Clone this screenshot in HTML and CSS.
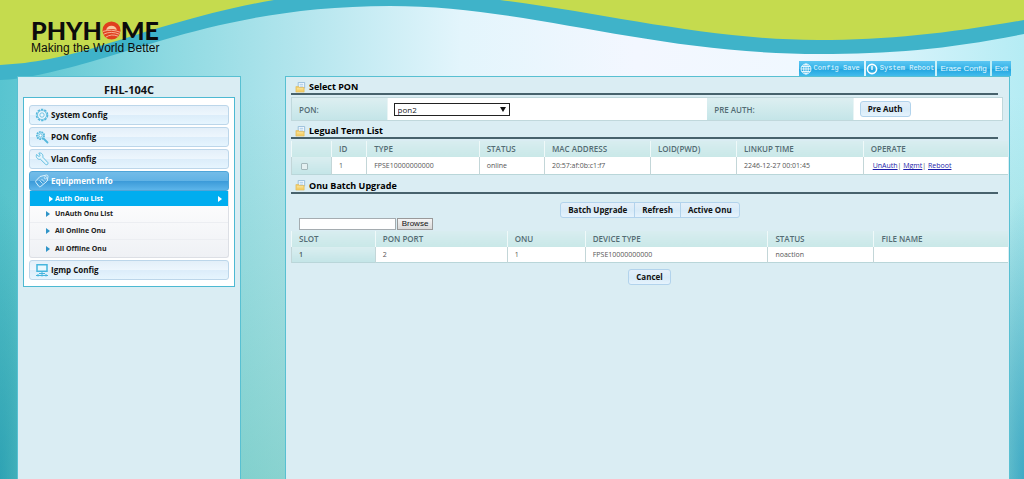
FILE: index.html
```html
<!DOCTYPE html>
<html lang="en">
<head>
<meta charset="utf-8">
<title>FHL-104C</title>
<link rel="stylesheet" href="styles.css">
</head>
<body>
<svg class="waves" viewBox="0 0 1024 90" preserveAspectRatio="none" aria-hidden="true">
  <path fill="#3fb3c9" d="M0 0H1024V34C950 49 890 54 820 54C650 54 530 6 390 6C250 6 160 42 90 62C50 73 25 79 0 80Z"/>
  <path fill="#c5db4e" d="M0 0H274C205 12 150 31 100 46C60 58 35 63 0 65Z"/>
  <path fill="#c5db4e" d="M500 0H1024V20C950 33 890 40 818 40C710 40 610 14 500 0Z"/>
</svg>
<svg class="defs" aria-hidden="true">
  <symbol id="note" viewBox="0 0 12 12"><path fill="#f7fbff" stroke="#94bbd9" d="M3.5.5h7v6h-7z"/><path stroke="#9fc6e4" d="M5 2.500h4M5 4.500h4"/><path fill="#f3cf6b" stroke="#dfb550" stroke-width=".6" d="M1 5h3l1 1h5v5H1z"/><path fill="#fce9a5" d="M2 7h7v1H2z"/></symbol>
</svg>
<header class="header">
  <div class="brand">
    <div class="brand-name"><span>PHYH</span><svg class="sun" viewBox="0 0 20 20" role="img" aria-label="O"><circle cx="10" cy="10" r="9.500" fill="#e0401f"/><path fill="#f9c9a0" d="M4.500 9.500a5.500 4.500 0 0 1 11 0q-5-2-11 0z"/><path fill="none" stroke="#f6b79a" stroke-width="1" d="M1 11q9-3 18.500 1M1.500 14q8-4 17 0M4 17q6-4 13-1"/></svg><span>ME</span></div>
    <div class="tagline">Making the World Better</div>
  </div>
  <nav class="tools">
    <a class="tool mono" href="#"><svg viewBox="0 0 12 12"><g fill="none" stroke="#fff" stroke-width=".8"><circle cx="6" cy="6" r="5"/><ellipse cx="6" cy="6" rx="2.300" ry="5"/><path d="M1 6h10M6 1v10M1.700 3.500h8.600M1.700 8.500h8.600"/></g></svg><span>Config Save</span></a>
    <a class="tool mono" href="#"><svg viewBox="0 0 12 12"><circle cx="6" cy="6" r="4.600" fill="none" stroke="#fff" stroke-width="1.600"/><path stroke="#fff" stroke-width="1.400" d="M6 3v4"/></svg><span>System Reboot</span></a>
    <a class="tool" href="#">Erase Config</a>
    <a class="tool" href="#">Exit</a>
  </nav>
</header>
<div class="page">
  <aside class="sidebar">
    <h1 class="device">FHL-104C</h1>
    <nav class="menu">
      <a class="item" href="#"><svg viewBox="0 0 14 14"><circle cx="7" cy="7" r="5.500" fill="none" stroke="#55b8dc" stroke-width="1.600" stroke-dasharray="2.400 1.050"/><circle cx="7" cy="7" r="4.500" fill="#edf7fd" stroke="#55b8dc" stroke-width=".8"/><circle cx="7" cy="7" r="2.200" fill="none" stroke="#55b8dc" stroke-width=".8"/></svg>System Config</a>
      <a class="item" href="#"><svg viewBox="0 0 14 14"><circle cx="5.500" cy="5.500" r="3.600" fill="#c9e9f7" stroke="#55b8dc" stroke-width="1.800" stroke-dasharray="1.700 .8"/><circle cx="5.500" cy="5.500" r="1.600" fill="#fff" stroke="#55b8dc" stroke-width=".8"/><path stroke="#55b8dc" stroke-width="1.800" stroke-linecap="round" d="m8.500 8.500 4 4"/></svg>PON Config</a>
      <a class="item" href="#"><svg viewBox="0 0 14 14"><path fill="#e3f4fc" stroke="#55b8dc" stroke-width=".9" d="M1.500 2.500 4 4.500 5.200 3.500 3.800 1C6.500.5 8.500 2.500 7.800 5.200l5 5.300c.8 1.500-.8 2.800-2 2L5.500 7.300C3 8 .5 5.500 1.500 2.500z"/></svg>Vlan Config</a>
      <a class="item open" href="#"><svg viewBox="0 0 14 14"><path fill="none" stroke="#d9f1fc" d="M5 2.500 11.500 1q1.500 0 1.500 1.500l-.8 4.500-6.500 5.500q-1 .8-2-.3L1 8.500q-.8-1 .2-2z"/><circle cx="10.500" cy="3.700" r="1.200" fill="none" stroke="#d9f1fc" stroke-width=".8"/><path stroke="#d9f1fc" stroke-width=".8" d="m4.500 6.500 3 3M6.500 5l3 3"/></svg>Equipment Info</a>
      <div class="submenu">
        <a class="sub current" href="#"><i class="arrow"></i>Auth Onu List<i class="arrow end"></i></a>
        <a class="sub" href="#"><i class="arrow"></i>UnAuth Onu List</a>
        <a class="sub" href="#"><i class="arrow"></i>All Online Onu</a>
        <a class="sub" href="#"><i class="arrow"></i>All Offline Onu</a>
      </div>
      <a class="item" href="#"><svg viewBox="0 0 14 14"><path fill="#e9f8fe" stroke="#46b5dd" stroke-width="1.500" d="M2 1.700h10v6.600H2z"/><path fill="none" stroke="#46b5dd" d="M7 8.500v2M4 10.500h6M1 12.500h12M3 11v2.500M7 11v2.500M11 11v2.500"/></svg>Igmp Config</a>
    </nav>
  </aside>
  <main class="main">
    <h2 class="heading"><svg><use href="#note"/></svg>Select PON</h2>
    <div class="form">
      <label class="form-label" for="pon">PON:</label>
      <div class="form-field"><select id="pon" class="select"><option>pon2</option></select></div>
      <div class="form-label">PRE AUTH:</div>
      <div class="form-field"><button class="btn" type="button">Pre Auth</button></div>
    </div>
    <h2 class="heading"><svg><use href="#note"/></svg>Legual Term List</h2>
    <table class="grid terms">
      <colgroup><col class="w-pick"><col class="w-id"><col class="w-type"><col class="w-status"><col class="w-mac"><col class="w-loid"><col class="w-time"><col></colgroup>
      <thead><tr><th></th><th>ID</th><th>TYPE</th><th>STATUS</th><th>MAC ADDRESS</th><th>LOID(PWD)</th><th>LINKUP TIME</th><th>OPERATE</th></tr></thead>
      <tbody><tr><td class="lead"><input class="check" type="checkbox" aria-label="Select ONU 1"></td><td>1</td><td>FPSE10000000000</td><td>online</td><td>20:57:af:0b:c1:f7</td><td></td><td>2246-12-27 00:01:45</td><td class="ops"><a href="#">UnAuth</a>| <a href="#">Mgmt</a>| <a href="#">Reboot</a></td></tr></tbody>
    </table>
    <h2 class="heading"><svg><use href="#note"/></svg>Onu Batch Upgrade</h2>
    <div class="actions group">
      <button class="btn" type="button">Batch Upgrade</button><button class="btn" type="button">Refresh</button><button class="btn" type="button">Active Onu</button>
    </div>
    <div class="upload"><input class="file" type="text" aria-label="Upgrade file"><button class="browse" type="button">Browse</button></div>
    <table class="grid">
      <colgroup><col class="w-slot"><col class="w-port"><col class="w-onu"><col class="w-device"><col class="w-state"><col></colgroup>
      <thead><tr><th>SLOT</th><th>PON PORT</th><th>ONU</th><th>DEVICE TYPE</th><th>STATUS</th><th>FILE NAME</th></tr></thead>
      <tbody><tr><td class="lead">1</td><td>2</td><td>1</td><td>FPSE10000000000</td><td>noaction</td><td></td></tr></tbody>
    </table>
    <div class="actions"><button class="btn" type="button">Cancel</button></div>
  </main>
</div>
</body>
</html>
```
FILE: styles.css
```css
* { box-sizing: border-box; }
body {
  margin: 0;
  min-height: 100vh;
  display: flex;
  flex-direction: column;
  font-family: "Open Sans", "Noto Sans", sans-serif;
  font-size: 8px;
  color: #111;
  background:
    radial-gradient(4% 60% at 0 100%, rgba(30, 150, 175, .7), rgba(30, 150, 175, 0)),
    radial-gradient(4% 60% at 100% 100%, rgba(30, 150, 190, .7), rgba(30, 150, 190, 0)),
    linear-gradient(180deg, rgba(80, 185, 165, 0) 20%, rgba(80, 185, 165, .4) 100%),
    linear-gradient(90deg, #58c4d0 0, #8fdae2 17%, #b5e6ee 30%, #e3f5fc 45%, #f3f7ff 62%, #f0f8ff 78%, #b5ecf4 100%);
}
a { color: inherit; text-decoration: none; }
button, input, select { font-family: inherit; margin: 0; }
.waves { position: absolute; top: 0; left: 0; width: 100%; height: 90px; z-index: -1; }
.defs { position: absolute; width: 0; height: 0; }

.header { display: flex; justify-content: space-between; align-items: flex-end; height: 76px; padding: 0 13px 0 31px; }
.brand { align-self: flex-start; padding-top: 18px; color: #0c0c0c; }
.brand-name { display: flex; align-items: center; height: 24px; font: 900 25px/24px Lato, sans-serif; }
.sun { width: 19px; height: 19px; }
.tagline { font: 12px/12px "Liberation Sans", Arial, sans-serif; }
.tools { display: flex; gap: 2px; }
.tool { display: flex; align-items: center; gap: 2px; height: 15px; padding: 0 3px; color: #e6f8ff; font: 8px/15px "Liberation Sans", Arial, sans-serif; background: linear-gradient(#5cc6f2, #35b3e8 50%, #1fa4df 52%, #43bcec); }
.tool svg { width: 12px; height: 12px; }
.tool.mono { padding: 0 1px 0 0; font-family: "Liberation Mono", monospace; font-size: 7px; }
.tool.mono:first-child { padding: 0 4px 0 1px; }

.page { flex: 1; display: grid; grid-template-columns: 224px minmax(0, 1fr); column-gap: 44px; padding: 0 14px 0 17px; }
.sidebar { padding: 0 5px; background: #daedf3; border: 1px solid #58c0d2; border-bottom: 0; }
.device { margin: 0; height: 20px; padding-top: 4px; font-size: 11px; line-height: 17px; font-weight: 700; text-align: center; }
.menu { padding: 7px 5px 6px; background: #fff; border: 1px solid #4db9d2; }
.item { display: flex; align-items: center; gap: 2px; height: 20px; margin-bottom: 2px; padding-left: 5px; border: 1px solid #bcd6ea; border-radius: 3px; font-size: 8px; line-height: 10px; font-weight: 700; background: linear-gradient(#e3eff9, #edf6fd 48%, #dcedfa 52%, #e6f5fe); }
.item:last-child { margin-bottom: 0; }
.item svg { width: 14px; height: 14px; }
.item.open { margin-bottom: 0; border-color: #4ea5d8; color: #fff; background: linear-gradient(#73bce8, #62b3e5 48%, #3c9bd9 52%, #5db5ea); }
.submenu { margin-bottom: 2px; border: 1px solid #dcdfe5; border-top: 0; border-radius: 0 0 3px 3px; background: linear-gradient(#fff, #eff1f5); }
.sub { display: flex; align-items: center; gap: 5px; height: 17px; padding-left: 16px; border-bottom: 1px solid #eceef2; font-size: 7px; line-height: 10px; font-weight: 700; color: #222; }
.sub:last-child { border-bottom: 0; }
.sub.current { height: 15px; padding: 0 6px 0 19px; gap: 2px; border: 0; background: #00adef; color: #fff; }
.arrow { border: 3px solid transparent; border-left: 4px solid #2f94c8; border-right: 0; }
.current .arrow { border-left-color: #fff; }
.arrow.end { margin-left: auto; }

.main { padding: 4px 1px 0 5px; background: #daedf3; border: 1px solid #58c0d2; border-bottom: 0; }
.heading { display: flex; align-items: center; gap: 3px; height: 14px; margin: 0 10px 2px 0; padding-left: 4px; border-bottom: 2px solid #47626c; font-size: 9px; line-height: 12px; font-weight: 700; color: #000; }
.heading svg { width: 11px; height: 11px; }
.form { display: grid; grid-template-columns: 96fr 321fr 147fr 149fr; height: 24px; margin: 0 5px 4px 0; border: 1px solid #c0d8dc; background: #fff; }
.form-label { display: flex; align-items: center; padding-left: 7px; font-weight: 600; color: #536c74; border-right: 1px solid #e8f4f5; background: linear-gradient(#ddeff1, #c4e5e8); }
.form-field { display: flex; align-items: center; padding-left: 6px; }
.select { appearance: none; width: 116px; height: 13px; padding: 0 3px; border: 1px solid #222; border-radius: 0; font-size: 8px; line-height: 11px; color: #222; background: #fff; }
.form-field:has(.select)::after { content: ""; margin-left: -10px; border: 3px solid transparent; border-top: 5px solid #111; border-bottom: 0; pointer-events: none; }

.grid { width: 100%; table-layout: fixed; border-collapse: collapse; border-bottom: 1px solid #b9d6d9; background: #fff; }
.grid th, .grid td { height: 16px; padding: 0 0 0 7px; line-height: 10px; text-align: left; white-space: nowrap; border-left: 1px solid #c3d6d8; }
.grid th { font-size: 8px; font-weight: 600; color: #536c74; border-left-color: #eff9f9; background: linear-gradient(#d8edf0, #c9e8e8); }
.grid td { padding-top: 2px; font-size: 7px; color: #555; }
.terms { margin-bottom: 5px; }
.terms td { height: 17px; }
.grid .lead { font-weight: 600; color: #455; background: linear-gradient(#daeef0, #c4e5e7); }
.check { display: block; width: 7px; height: 7px; margin-left: 2px; appearance: none; border: 1px solid #a4b8bb; border-radius: 1px; background: #e4f0f1; }
.grid .ops { padding-left: 9px; }
.ops a { color: #1c1caa; text-decoration: underline; }

.actions { display: flex; justify-content: center; padding-top: 6px; }
.btn { height: 16px; padding: 0 7px; border: 1px solid #b2d3ec; border-radius: 3px; font-size: 8px; line-height: 12px; font-weight: 700; color: #111; background: linear-gradient(#e4eff9, #d8ebf8 55%, #e5f3fd); }
.group .btn { border-radius: 0; margin-right: -1px; }
.group .btn:first-child { border-radius: 3px 0 0 3px; }
.group .btn:last-child { border-radius: 0 3px 3px 0; }
.upload { display: flex; gap: 1px; height: 13px; padding-left: 8px; }
.file { width: 97px; height: 12px; padding: 0 2px; border: 1px solid #a5acb0; font-size: 8px; background: #fff; }
.browse { width: 36px; height: 12px; padding: 0; border: 1px solid #999; font: 8px/10px "Liberation Sans", Arial, sans-serif; color: #111; background: linear-gradient(#f5f5f5, #d9d9d9); }

.w-pick { width: 5.6%; }
.w-id { width: 4.9%; }
.w-type { width: 15.7%; }
.w-status { width: 9.1%; }
.w-mac { width: 14.8%; }
.w-loid { width: 12%; }
.w-time { width: 17.7%; }
.w-slot { width: 11.7%; }
.w-port { width: 18.4%; }
.w-onu { width: 10.9%; }
.w-device { width: 25.5%; }
.w-state { width: 14.8%; }
```
